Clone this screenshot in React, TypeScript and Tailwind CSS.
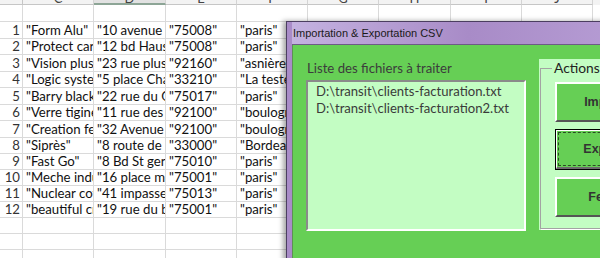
import React from 'react';

const rows: [string, string, string, string][] = [
  ['"Form Alu"', '"10 avenue du Général"', '"75008"', '"paris"'],
  ['"Protect care"', '"12 bd Haussmann"', '"75008"', '"paris"'],
  ['"Vision plus"', '"23 rue plus loin"', '"92160"', '"asnière"'],
  ['"Logic system"', '"5 place Charles"', '"33210"', '"La teste"'],
  ['"Barry black"', '"22 rue du Grand"', '"75017"', '"paris"'],
  ['"Verre tigineuse"', '"11 rue des prés"', '"92100"', '"boulogne"'],
  ['"Creation fermeture"', '"32 Avenue de la"', '"92100"', '"boulogne"'],
  ['"Siprès"', '"8 route de la"', '"33000"', '"Bordeaux"'],
  ['"Fast Go"', '"8 Bd St germain"', '"75010"', '"paris"'],
  ['"Meche industrie"', '"16 place mercure"', '"75001"', '"paris"'],
  ['"Nuclear coton"', '"41 impasse pierre"', '"75013"', '"paris"'],
  ['"beautiful creation"', '"19 rue du bout"', '"75001"', '"paris"'],
];

const letters = ['C', 'D', 'E', 'F', 'G', 'H', 'I', 'J'];
const gridCols = 'grid grid-cols-[23px_71px_72px_71px_71px_71px_72px_71px_71px]';
const cell = 'overflow-hidden whitespace-nowrap border-r border-b border-[#dadada] flex items-center pl-[3px] pt-[2px]';

function Sheet() {
  return (
    <div className="font-['Lato',sans-serif] text-[13.2px] text-[#111]">
      <div className={`${gridCols} h-[5px] bg-[#f3f3f3]`}>
        <div className="border-r border-b border-[#c6c6c6]" />
        {letters.map((l) => (
          <div
            key={l}
            className={`overflow-hidden border-r border-[#d4d4d4] text-center text-[13px] leading-[12px] text-[#444] ${
              l === 'D' ? 'border-b-2 border-b-[#8da596] bg-[#e2e2e2]' : 'border-b border-b-[#c6c6c6]'
            }`}
          >
            <div className="-mt-[8px]">{l}</div>
          </div>
        ))}
      </div>
      <div className={`${gridCols} h-[17px]`}>
        {Array.from({ length: 9 }).map((_, i) => (
          <div key={i} className={cell} />
        ))}
      </div>
      {rows.map((r, i) => (
        <div key={i} className={`${gridCols} ${i < 7 ? 'h-[16.5px]' : 'h-[16px]'}`}>
          <div className={`${cell} justify-end pr-[2px] text-[#333]`}>{i + 1}</div>
          {r.map((v, j) => (
            <div key={j} className={cell}>
              {v}
            </div>
          ))}
          {Array.from({ length: 4 }).map((_, k) => (
            <div key={k} className={cell} />
          ))}
        </div>
      ))}
      {[0, 1, 2].map((n) => (
        <div key={n} className={`${gridCols} h-[16.3px]`}>
          {Array.from({ length: 9 }).map((_, i) => (
            <div key={i} className={cell} />
          ))}
        </div>
      ))}
    </div>
  );
}

const btnText = "font-['Liberation_Sans',sans-serif] text-[12.5px] font-bold text-[#333]";

function ActionButton({ label, focused }: { label: string; focused?: boolean }) {
  if (focused) {
    return (
      <div className="h-[41px] w-[109px] shrink-0 border border-black">
        <div className="h-full border-t border-l border-t-white border-l-white border-b-2 border-r-2 border-b-[#6b6b6b] border-r-[#6b6b6b] bg-[#66cf55] p-[1px]">
          <div className={`flex h-full items-center justify-center border border-dashed border-[#2c4a26] ${btnText}`}>
            {label}
          </div>
        </div>
      </div>
    );
  }
  return (
    <div
      className={`flex h-[40px] w-[109px] shrink-0 items-center justify-center border-t-2 border-l-2 border-t-white border-l-white border-b-2 border-r-2 border-b-[#555] border-r-[#555] bg-[#66cf55] ${btnText}`}
    >
      {label}
    </div>
  );
}

function CsvDialog() {
  return (
    <div className="absolute left-[286px] top-[21px] flex h-[260px] w-[360px] flex-col border border-[#4b3e60] bg-[#a98cc8] pl-[5px] shadow-[-3px_0_5px_rgba(0,0,0,0.35)]">
      <div className="flex h-[23px] items-center border-b border-[#6d5b86] bg-gradient-to-r from-[#c4b2e0] via-[#a88bc7] to-[#b89fd6] pl-[1px] font-['Liberation_Sans',sans-serif] text-[11px] text-[#1a1a1a]">
        Importation &amp; Exportation CSV
      </div>
      <div className="flex flex-1 border-l border-[#5f8f55] bg-[#66cf55] pl-[13px] pt-[14px]">
        <div className="flex flex-col">
          <div className="h-[18px] whitespace-nowrap pl-[1px] font-['Lato',sans-serif] text-[13.2px] leading-[18px] text-[#3c3c3c]">
            Liste des fichiers à traiter
          </div>
          <div className="mt-[3px] h-[151px] w-[220px] whitespace-nowrap border-t-2 border-l-2 border-t-[#8a8a8a] border-l-[#8a8a8a] border-b-2 border-r-2 border-b-white border-r-white bg-[#c3fdc3] pl-[8px] pt-[1px] font-['Lato',sans-serif] text-[13.1px] leading-[17px] text-[#3a3a3a]">
            <div>D:\transit\clients-facturation.txt</div>
            <div>D:\transit\clients-facturation2.txt</div>
          </div>
        </div>
        <div className="ml-[13px] h-[171px] w-[140px] bg-[#c3fdc3] pl-[1px]">
          <fieldset className="h-[170px] min-w-0 border border-[#a3a3a3] pl-[14px] shadow-[1px_1px_0_#fff]">
            <legend className="ml-[-3px] px-[2px] font-['Lato',sans-serif] text-[13.8px] leading-[18px] text-[#222]">
              Actions
            </legend>
            <div className="mt-[5px] flex flex-col gap-[7px]">
              <ActionButton label="Importer" />
              <ActionButton label="Exporter" focused />
              <ActionButton label="Fermer" />
            </div>
          </fieldset>
        </div>
      </div>
    </div>
  );
}

export default function App() {
  return (
    <div className="relative h-[258px] w-[600px] overflow-hidden bg-white">
      <Sheet />
      <CsvDialog />
    </div>
  );
}
